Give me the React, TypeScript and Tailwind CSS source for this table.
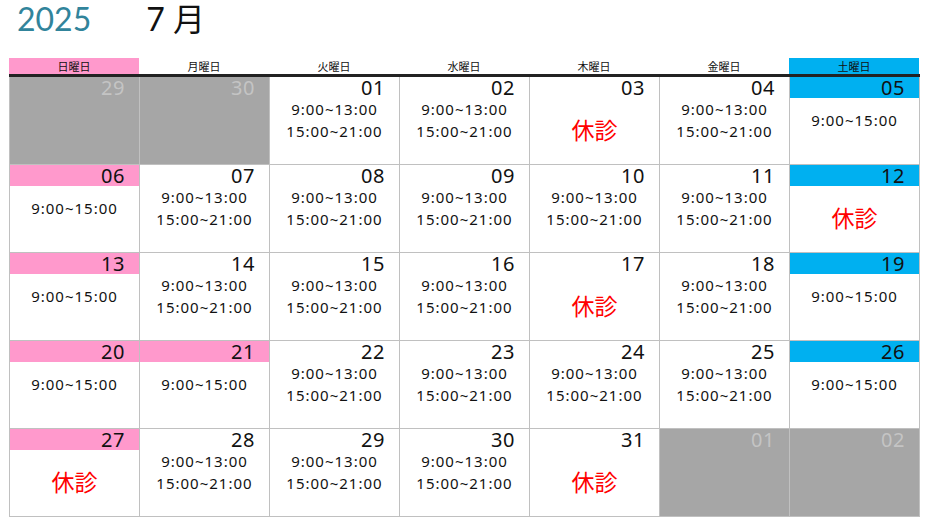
type Kind = "gray" | "plain" | "sun" | "sat";
type Body = "two" | "one" | "closed" | "none";

type Cell = { day: string; kind: Kind; body: Body };

const c = (day: string, kind: Kind, body: Body): Cell => ({ day, kind, body });

const weeks: Cell[][] = [
  [c("29", "gray", "none"), c("30", "gray", "none"), c("01", "plain", "two"), c("02", "plain", "two"), c("03", "plain", "closed"), c("04", "plain", "two"), c("05", "sat", "one")],
  [c("06", "sun", "one"), c("07", "plain", "two"), c("08", "plain", "two"), c("09", "plain", "two"), c("10", "plain", "two"), c("11", "plain", "two"), c("12", "sat", "closed")],
  [c("13", "sun", "one"), c("14", "plain", "two"), c("15", "plain", "two"), c("16", "plain", "two"), c("17", "plain", "closed"), c("18", "plain", "two"), c("19", "sat", "one")],
  [c("20", "sun", "one"), c("21", "sun", "one"), c("22", "plain", "two"), c("23", "plain", "two"), c("24", "plain", "two"), c("25", "plain", "two"), c("26", "sat", "one")],
  [c("27", "sun", "closed"), c("28", "plain", "two"), c("29", "plain", "two"), c("30", "plain", "two"), c("31", "plain", "closed"), c("01", "gray", "none"), c("02", "gray", "none")],
];

const heads = ["日曜日", "月曜日", "火曜日", "水曜日", "木曜日", "金曜日", "土曜日"];

const DayCell = ({ cell }: { cell: Cell }) => {
  const band =
    cell.kind === "sun" ? "bg-[#ff99cc] text-[#111]" : cell.kind === "sat" ? "bg-[#00b0f0] text-[#111]" : cell.kind === "gray" ? "text-[#c4c4c4]" : "text-[#111]";
  return (
    <div className={`h-[87px] ${cell.kind === "gray" ? "bg-[#a6a6a6]" : "bg-white"}`}>
      <div className={`h-[21px] pr-[14px] text-right text-[20px] leading-[22px] tracking-[0.5px] ${band}`}>{cell.day}</div>
      {cell.body === "two" && (
        <div className="text-center text-[15px] leading-[22px] tracking-[1px] text-[#111]">
          <div>9:00~13:00</div>
          <div>15:00~21:00</div>
        </div>
      )}
      {cell.body === "one" && <div className="pt-[11px] text-center text-[15px] leading-[22px] tracking-[1px] text-[#111]">9:00~15:00</div>}
      {cell.body === "closed" && <div className="pt-[17px] text-center text-[23px] leading-[30px] text-[#ff0000]">休診</div>}
    </div>
  );
};

export default function App() {
  return (
    <div className="h-[521px] w-[927px] overflow-hidden bg-white font-['Noto_Sans','Noto_Sans_CJK_JP',sans-serif]">
      <div className="flex h-[58px] items-start font-['Lato','Noto_Sans_CJK_JP',sans-serif]">
        <span className="ml-[17px] text-[32px] leading-[38px] text-[#31849b]">2025</span>
        <span className="ml-[55px] text-[32px] leading-[38px] text-[#111]">7 月</span>
      </div>
      <div className="ml-[9px] w-[911px]">
        <div className="grid grid-cols-[repeat(7,130px)] border-b-[3px] border-[#222]">
          {heads.map((h, i) => (
            <div
              key={h}
              className={`h-[16px] text-center text-[11px] leading-[17px] text-[#111] ${i === 0 ? "bg-[#ff99cc]" : i === 6 ? "bg-[#00b0f0]" : ""}`}
            >
              {h}
            </div>
          ))}
        </div>
        <div className="grid grid-cols-[repeat(7,129px)] gap-px bg-[#c0c0c0] px-px pb-px">
          {weeks.flat().map((cell, i) => (
            <DayCell key={i} cell={cell} />
          ))}
        </div>
      </div>
    </div>
  );
}
